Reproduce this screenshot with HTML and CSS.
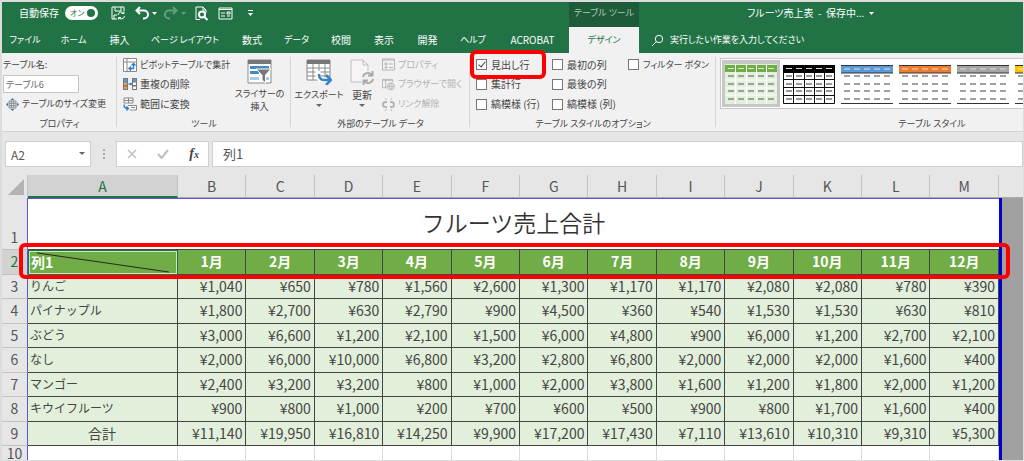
FILE: index.html
```html
<!DOCTYPE html>
<html lang="ja">
<head>
<meta charset="utf-8">
<title>フルーツ売上表</title>
<link rel="stylesheet" href="styles.css">
</head>
<body>
<div class="window">
  <header class="titlebar">
    <div class="quick">
      <label class="autosave" for="autosave">自動保存</label>
      <button class="switch" id="autosave" type="button">オン<span class="knob"></span></button>
      <button class="qbtn save" type="button" aria-label="保存"><svg width="15" height="14" viewBox="0 0 15 14"><path d="M6 13H1V1h12v4M4 1v4h6V1M3 13V9h3M7 9a3.3 3.3 0 0 1 6-1.500V5.500M13 7.500h-2.500M13.500 10a3.300 3.300 0 0 1-6 1.500V13.500M7.500 11.500H10"/></svg></button>
      <button class="qbtn undo" type="button" aria-label="元に戻す"><svg width="24" height="14" viewBox="0 0 24 14"><path class="bold" d="M5 1 1.500 4.500 5 8M2 4.500h7a3.500 3.500 0 0 1 0 8H8"/><path class="fill" d="M17 6h5l-2.500 3z"/></svg></button>
      <button class="qbtn redo" type="button" aria-label="やり直し"><svg width="24" height="14" viewBox="0 0 24 14"><path class="bold" d="M9 1l3.500 3.500L9 8M12 4.500H5a3.500 3.500 0 0 0 0 8h1"/><path class="fill" d="M17 6h5l-2.500 3z"/></svg></button>
      <button class="qbtn preview" type="button" aria-label="印刷プレビュー"><svg width="14" height="15" viewBox="0 0 14 15"><path d="M5 13.500H1V1h7l3 3v3M8 1v3h3"/><circle class="bold" cx="7" cy="8.500" r="3"/><path class="bold" d="M9.500 11l3 3"/></svg></button>
      <button class="qbtn form" type="button" aria-label="フォーム"><svg width="15" height="13" viewBox="0 0 15 13"><path d="M1 1h13v11H1zM1 2.500h13M3 6h4M3 9h4M9 5h3v2H9zM9 9h3"/></svg></button>
      <button class="qbtn more" type="button" aria-label="カスタマイズ"><svg width="7" height="8" viewBox="0 0 7 8"><path d="M1 1.500h5"/><path class="fill" d="M1 4h5L3.500 7z"/></svg></button>
    </div>
    <div class="context">テーブル ツール</div>
    <div class="doc">フルーツ売上表&nbsp; -&nbsp; 保存中...&nbsp; <svg width="5" height="3" viewBox="0 0 5 3"><path class="fill" d="M0 0h5L2.500 3z"/></svg></div>
  </header>
  <nav class="tabs">
    <a class="kana" href="#">ファイル</a>
    <a class="kana" href="#">ホーム</a>
    <a href="#">挿入</a>
    <a class="kana" href="#">ページ レイアウト</a>
    <a href="#">数式</a>
    <a class="kana" href="#">データ</a>
    <a href="#">校閲</a>
    <a href="#">表示</a>
    <a href="#">開発</a>
    <a class="kana" href="#">ヘルプ</a>
    <a href="#">ACROBAT</a>
    <a class="kana active" href="#">デザイン</a>
    <a class="kana tell" href="#"><svg width="13" height="13" viewBox="0 0 13 13"><circle cx="8" cy="5" r="3.700"/><path d="M5.300 7.700 1 12"/></svg>実行したい作業を入力してください</a>
  </nav>

  <section class="ribbon">
    <div class="group g-prop">
      <div class="rows">
        <label class="small" for="tname">テーブル名:</label>
        <input class="tname" id="tname" type="text" value="テーブル6">
        <button class="cmd small" type="button"><svg width="13" height="13" viewBox="0 0 13 13"><path class="g" d="M3 3h7v7H3zM3 5.300h7M3 7.700h7M5.300 3v7M7.700 3v7"/><path class="bf" d="M6.500 0l2 2h-4zM6.500 13l2-2h-4zM0 6.500l2-2v4zM13 6.500l-2-2v4z"/></svg>テーブルのサイズ変更</button>
      </div>
      <div class="name">プロパティ</div>
    </div>
    <div class="group g-tool">
      <div class="split">
        <div class="rows">
          <button class="cmd small" type="button"><svg width="14" height="14" viewBox="0 0 14 14"><path class="g" fill="#fff" d="M.5.5h13v13H.5zM.5 4h13M4 .5v13" /><path class="b" d="M6 10.500h4.500V5.500M8 8.500l-2 2 2 2M8.500 7.500l2-2 2 2"/></svg>ピボットテーブルで集計</button>
          <button class="cmd" type="button"><svg width="14" height="14" viewBox="0 0 14 14"><path class="df" d="M0 1h5v12H0zM9 1h5v12H9z"/><path fill="#5b9bd5" d="M1 2h3v2.500H1zM10 2h3v2.500h-3z"/><path fill="#f0a04b" d="M1 5.500h3V8H1zM1 9.500h3V12H1z"/><path fill="#fff" d="M10 5.500h3V8h-3zM10 9.500h3V12h-3z"/><path class="b" d="M5.500 7h3M7.500 6l1 1-1 1"/></svg>重複の削除</button>
          <button class="cmd" type="button"><svg width="14" height="14" viewBox="0 0 14 14"><path class="g" fill="#fff" d="M1 1h9v5H1zM1 3.500h9M5.500 1v5M5 8.500h8.500V13H7"/><path class="g" d="M8 10.500h4"/><path class="b" d="M1 7.500c0 3 1 4 4 4M3.500 9.500l2 2-2 2"/></svg>範囲に変換</button>
        </div>
        <button class="big slicer" type="button"><svg width="25" height="25" viewBox="0 0 25 25"><path class="g" fill="#fff" d="M1 1h23v23H1z"/><path class="df" d="M1 1h23v4H1z"/><path fill="#4488c4" d="M3 7h19v3H3z"/><path fill="#4488c4" d="M3 12h9v3H3z"/><path fill="#a8cbe8" d="M3 18h9v3H3zM18 18h4v3h-4z"/><path class="df" stroke="#fff" d="M9 10h15l-5.500 6v8L15 21v-5z"/></svg><span>スライサーの<br>挿入</span></button>
      </div>
      <div class="name">ツール</div>
    </div>
    <div class="group g-ext">
      <div class="split">
        <button class="big export" type="button"><svg width="26" height="26" viewBox="0 0 26 26"><path class="g" fill="#fff" d="M1 1h23v20H1zM1 9h23M1 13h23M1 17h23M7 5v16M13 5v16M19 5v16"/><path class="df" d="M1 1h23v4H1z"/><path d="M12 12v4c0 3 2 5 5 5h7" stroke="#fff" stroke-width="5" fill="none"/><path d="M13 15c0 4 2 6 5 6h5M20 16l5 5-5 5" stroke="#3b82c4" stroke-width="2.500" fill="none"/></svg><span>エクスポート</span><i class="caret"></i></button>
        <button class="big refresh" type="button"><svg width="25" height="26" viewBox="0 0 25 26"><path d="M1 1h12l5 5v17H1zM13 1v5h5" fill="#f7f3f7" stroke="#c4bec4"/><circle cx="18" cy="19" r="7" fill="#f1f1f1"/><path d="M13 18a5 5 0 0 1 9-2M23 20a5 5 0 0 1-9 2M22.500 12v4.500H18M13.500 26v-4.500H18" fill="none" stroke="#a9a9a9" stroke-width="1.800"/></svg><span class="kanji">更新</span><i class="caret"></i></button>
        <div class="rows">
          <button class="cmd small off" type="button" disabled><svg width="13" height="13" viewBox="0 0 13 13"><path class="o" d="M.5 1h12v11H.5zM.5 2h12M3 5h2v2H3zM3 9h2v1H3zM7 6h4M7 9.500h4"/></svg>プロパティ</button>
          <button class="cmd small off" type="button" disabled><svg width="13" height="13" viewBox="0 0 14 13"><path class="o" d="M5 10H.5V1h11v3M.5 2h11M4 2v8"/><circle class="o" cx="9.500" cy="8.500" r="3.800"/><path class="o" d="M6 8.500h7M9.500 5c-2 2-2 5 0 7M9.500 5c2 2 2 5 0 7"/></svg>ブラウザーで開く</button>
          <button class="cmd small off" type="button" disabled><svg width="13" height="13" viewBox="0 0 13 13"><path class="o thick" d="M5 4H3.500a2.500 2.500 0 0 0 0 5H5M8 4h1.500a2.500 2.500 0 0 1 0 5H8"/><path class="o" d="M3 0l1.500 2M10 0 8.500 2M3 13l1.500-2M10 13l-1.500-2"/></svg>リンク解除</button>
        </div>
      </div>
      <div class="name">外部のテーブル データ</div>
    </div>
    <div class="group g-opt">
      <div class="checks">
        <label><input type="checkbox" checked>見出し行</label>
        <label><input type="checkbox">最初の列</label>
        <label class="small"><input type="checkbox">フィルター ボタン</label>
        <label><input type="checkbox">集計行</label>
        <label class="wide"><input type="checkbox">最後の列</label>
        <label><input type="checkbox">縞模様 (行)</label>
        <label><input type="checkbox">縞模様 (列)</label>
      </div>
      <div class="name">テーブル スタイルのオプション</div>
      <div class="mark mark-check"></div>
    </div>
    <div class="group g-style">
      <div class="gallery">
        <svg class="defs" width="0" height="0"><defs>
          <g id="d"><path d="M3 0h6M13 0h6M23 0h6M33 0h6M43 0h6"/></g>
          <g id="body"><use href="#d" y="12"/><use href="#d" y="20"/><use href="#d" y="27"/><use href="#d" y="35"/></g>
        </defs></svg>
        <button class="thumb selected" type="button" aria-label="緑"><svg width="52" height="40" viewBox="0 0 52 40"><path fill="#e2efda" d="M0 0h52v40H0z"/><path fill="#70ad47" d="M0 1h52v7H0z"/><path stroke="#fff" d="M10.500 0v40M21.500 0v40M31.500 0v40M41.500 0v40M0 16h52M0 24h52M0 31h52"/><use href="#d" y="4.500" stroke="#d5ecc6"/><use href="#body" stroke="#555"/></svg></button>
        <button class="thumb" type="button" aria-label="黒"><svg width="52" height="40" viewBox="0 0 52 40"><path fill="#fff" stroke="#111" d="M.5 1.500h51v38H.5z"/><path fill="#000" d="M0 1h52v8H0z"/><path stroke="#111" d="M10.500 1v38M21.500 1v38M31.500 1v38M41.500 1v38M0 15.500h52M0 23.500h52M0 31.500h52"/><use href="#d" y="4.500" stroke="#ddd"/><use href="#body" stroke="#333"/></svg></button>
        <button class="thumb" type="button" aria-label="青"><svg width="52" height="40" viewBox="0 0 52 40"><path fill="#5b9bd5" d="M0 1h52v8H0z"/><path stroke="#333" d="M0 1.500h52M0 9h52M0 39.500h52"/><use href="#d" y="5" stroke="#d4e5f5"/><use href="#body" stroke="#444"/></svg></button>
        <button class="thumb" type="button" aria-label="オレンジ"><svg width="52" height="40" viewBox="0 0 52 40"><path fill="#ed7d31" d="M0 1h52v8H0z"/><path stroke="#333" d="M0 1.500h52M0 9h52M0 39.500h52"/><use href="#d" y="5" stroke="#ffe0c8"/><use href="#body" stroke="#444"/></svg></button>
        <button class="thumb" type="button" aria-label="灰色"><svg width="52" height="40" viewBox="0 0 52 40"><path fill="#a5a5a5" d="M0 1h52v8H0z"/><path stroke="#333" d="M0 1.500h52M0 9h52M0 39.500h52"/><use href="#d" y="5" stroke="#ddd"/><use href="#body" stroke="#444"/></svg></button>
        <button class="thumb" type="button" aria-label="黄"><svg width="52" height="40" viewBox="0 0 52 40"><path fill="#ffc000" d="M0 1h52v8H0z"/><path stroke="#333" d="M0 1.500h52M0 9h52M0 39.500h52"/><use href="#d" y="5" stroke="#fff0c0"/><use href="#body" stroke="#444"/></svg></button>
      </div>
      <div class="name">テーブル スタイル</div>
    </div>
  </section>

  <section class="formula">
    <button class="cellref" type="button">A2<i class="caret"></i></button>
    <span class="grip"><i></i><i></i><i></i></span>
    <div class="fx">
      <button type="button" aria-label="キャンセル"><svg width="10" height="10" viewBox="0 0 10 10"><path d="M1 1l8 8M9 1 1 9" stroke="#bdbdbd" stroke-width="1.500"/></svg></button>
      <button type="button" aria-label="入力"><svg width="12" height="10" viewBox="0 0 12 10"><path d="M1 5l3.500 4L11 1" stroke="#bdbdbd" stroke-width="2" fill="none"/></svg></button>
      <button class="fxb" type="button"><i>f</i><small>x</small></button>
    </div>
    <input class="entry" type="text" value="列1" aria-label="数式バー">
  </section>

  <main class="sheet">
    <table>
      <colgroup><col class="c-num"><col class="c-a"><col span="12"><col class="c-out"></colgroup>
      <thead><tr><th class="corner"><svg width="16" height="16" viewBox="0 0 16 16"><path fill="#b3b3b3" d="M16 0v16H0z"/></svg></th><th class="sel">A</th><th>B</th><th>C</th><th>D</th><th>E</th><th>F</th><th>G</th><th>H</th><th>I</th><th>J</th><th>K</th><th>L</th><th>M</th><th></th></tr></thead>
      <tbody>
        <tr class="title"><th>1</th><td colspan="13">フルーツ売上合計</td><td class="out" rowspan="10"></td></tr>
        <tr class="months"><th>2</th><td class="cursor">列1<svg class="slash" viewBox="0 0 150 24" preserveAspectRatio="none"><path d="M8 2 142 22" stroke="#222" fill="none"/></svg></td><td>1月</td><td>2月</td><td>3月</td><td>4月</td><td>5月</td><td>6月</td><td>7月</td><td>8月</td><td>9月</td><td>10月</td><td>11月</td><td>12月</td></tr>
        <tr class="data"><th>3</th><td>りんご</td><td>¥1,040</td><td>¥650</td><td>¥780</td><td>¥1,560</td><td>¥2,600</td><td>¥1,300</td><td>¥1,170</td><td>¥1,170</td><td>¥2,080</td><td>¥2,080</td><td>¥780</td><td>¥390</td></tr>
        <tr class="data"><th>4</th><td>パイナップル</td><td>¥1,800</td><td>¥2,700</td><td>¥630</td><td>¥2,790</td><td>¥900</td><td>¥4,500</td><td>¥360</td><td>¥540</td><td>¥1,530</td><td>¥1,530</td><td>¥630</td><td>¥810</td></tr>
        <tr class="data"><th>5</th><td>ぶどう</td><td>¥3,000</td><td>¥6,600</td><td>¥1,200</td><td>¥2,100</td><td>¥1,500</td><td>¥6,000</td><td>¥4,800</td><td>¥900</td><td>¥6,000</td><td>¥1,200</td><td>¥2,700</td><td>¥2,100</td></tr>
        <tr class="data"><th>6</th><td>なし</td><td>¥2,000</td><td>¥6,000</td><td>¥10,000</td><td>¥6,800</td><td>¥3,200</td><td>¥2,800</td><td>¥6,800</td><td>¥2,000</td><td>¥2,000</td><td>¥2,000</td><td>¥1,600</td><td>¥400</td></tr>
        <tr class="data"><th>7</th><td>マンゴー</td><td>¥2,400</td><td>¥3,200</td><td>¥3,200</td><td>¥800</td><td>¥1,000</td><td>¥2,000</td><td>¥3,800</td><td>¥1,600</td><td>¥1,200</td><td>¥1,800</td><td>¥2,000</td><td>¥1,200</td></tr>
        <tr class="data"><th>8</th><td>キウイフルーツ</td><td>¥900</td><td>¥800</td><td>¥1,000</td><td>¥200</td><td>¥700</td><td>¥600</td><td>¥500</td><td>¥900</td><td>¥800</td><td>¥1,700</td><td>¥1,600</td><td>¥400</td></tr>
        <tr class="data total"><th>9</th><td>合計</td><td>¥11,140</td><td>¥19,950</td><td>¥16,810</td><td>¥14,250</td><td>¥9,900</td><td>¥17,200</td><td>¥17,430</td><td>¥7,110</td><td>¥13,610</td><td>¥10,310</td><td>¥9,310</td><td>¥5,300</td></tr>
        <tr class="blank"><th>10</th><td></td><td></td><td></td><td></td><td></td><td></td><td></td><td></td><td></td><td></td><td></td><td></td><td></td></tr>
      </tbody>
    </table>
    <div class="mark mark-row"></div>
  </main>
</div>
</body>
</html>
```

FILE: styles.css
```css
* { box-sizing: border-box; }
body {
  margin: 0;
  font-family: "Noto Sans CJK JP", sans-serif;
  font-size: 11px;
  line-height: 16px;
  color: #444;
  background: #e6e6e6;
}
button, input { font: inherit; color: inherit; margin: 0; }
button { padding: 0; border: 0; background: none; white-space: nowrap; }
svg { flex: none; }
.window {
  height: 100vh;
  overflow: hidden;
  border: solid #dcdcdc;
  border-width: 2px 1px 1px 2px;
}

/* title bar */
.titlebar { display: flex; height: 25px; background: #217346; color: #fff; }
.quick { width: 567px; display: flex; align-items: center; padding: 0 0 3px 17px; }
.autosave { width: 46px; font-size: 10px; }
.switch {
  display: flex; align-items: center; justify-content: space-between;
  width: 33px; height: 14px; padding: 0 3px 0 5px;
  border-radius: 7px; background: #fff; color: #217346;
  font-size: 8px; line-height: 14px;
  font-feature-settings: "palt";
}
.knob { width: 8px; height: 8px; border-radius: 50%; background: #217346; }
.qbtn { display: flex; }
.qbtn path, .qbtn circle { fill: none; stroke: #fff; }
.qbtn .bold { stroke-width: 2; }
.qbtn .fill, .doc .fill { fill: #fff; stroke: none; }
.save { margin-left: 13px; }
.undo { margin-left: 9px; }
.redo { margin-left: 5px; opacity: .3; }
.preview { margin-left: 7px; }
.form { margin-left: 9px; }
.more { margin-left: 14px; }
.context, .doc, .kana { font-feature-settings: "palt"; }
.context { width: 70px; background: #1e5c39; color: #a9c8b5; text-align: center; font-size: 9px; line-height: 22px; }
.doc { display: flex; align-items: center; padding: 0 0 3px 108px; font-size: 10px; white-space: pre; }

/* tabs */
.tabs {
  display: grid;
  grid-template-columns: 46px 51px 41px 90px 44px 45px 44px 42px 45px 46px 73px 70px auto;
  height: 26px; background: #217346;
}
.tabs a { color: #fff; text-decoration: none; text-align: center; line-height: 26px; font-size: 10px; white-space: nowrap; }
.tabs .kana { font-size: 9px; }
.tabs .active { background: #f1f1f1; color: #217346; }
.tabs .tell { display: flex; align-items: center; gap: 6px; padding-left: 12px; }
.tell svg { fill: none; stroke: #fff; }

/* ribbon */
.ribbon {
  display: flex; height: 79px;
  background: #f1f1f1; border-bottom: 1px solid #d2d2d2;
  font-feature-settings: "palt";
}
.group { position: relative; flex: none; padding-top: 2px; }
.group::after { content: ""; position: absolute; right: 0; top: 4px; bottom: 4px; width: 1px; background: #d6d6d6; }
.g-prop { width: 115px; }
.g-tool { width: 174px; }
.g-ext { width: 179px; }
.g-opt { width: 246px; z-index: 2; }
.g-style { width: 432px; }
.name { text-align: center; font-size: 9px; line-height: 20px; }
.rows { display: grid; grid-template-rows: repeat(3, 1fr); align-items: center; height: 59px; font-size: 10px; }
.g-prop .rows { padding-left: 1px; }
.tname { width: 76px; height: 18px; padding: 0 2px; border: 1px solid #c6c6c6; background: #fff; color: #666; font-size: 9px; }
.cmd { display: flex; align-items: center; gap: 3px; }
.rows .small, .checks .small { font-size: 9px; }
.g-prop .cmd { padding-left: 3px; }
.g { fill: none; stroke: #888; }
path.g[fill] { fill: #fff; }
.b { fill: none; stroke: #2f7fc1; stroke-width: 1.4; }
.bf { fill: #2f7fc1; }
.df { fill: #777; }
.o { fill: none; stroke: #b4b4b4; }
.thick { stroke-width: 2; }
.off { color: #b1b1b1; }
.split { display: flex; height: 59px; }
.g-tool .rows { padding-left: 6px; width: 115px; }
.big { display: flex; flex-direction: column; align-items: center; padding-top: 4px; font-size: 9px; line-height: 13px; }
.big span { margin-top: 3px; }
.big .kanji { font-size: 10px; }
.slicer { width: 55px; }
.export { width: 56px; }
.refresh { width: 30px; }
.g-ext .rows { padding-left: 5px; }
.caret { border: solid transparent; border-width: 3px 3px 0; border-top-color: #666; margin-top: 3px; }
.checks {
  display: grid;
  grid-template-columns: 76px 76px auto;
  grid-template-rows: repeat(3, 1fr);
  align-items: center;
  height: 59px; padding-left: 6px; font-size: 10px;
}
.checks label { display: flex; align-items: center; gap: 4px; white-space: nowrap; }
.checks .wide { grid-column: 2 / 4; }
.checks input {
  appearance: none; position: relative; flex: none; width: 11px; height: 11px;
  border: 1px solid #777; background: #fff;
}
.checks input:checked::after {
  content: ""; position: absolute; left: 3px; top: 0; width: 3px; height: 6px;
  border: solid #444; border-width: 0 1px 1px 0; transform: rotate(40deg);
}
.mark { position: absolute; border: 4px solid #f00; border-radius: 6px; pointer-events: none; }
.mark-check { left: 0; top: -3px; width: 76px; height: 29px; }
.gallery {
  display: flex; height: 51px; margin: 3px 0 5px 4px; padding: 1px;
  border: 1px solid #c6c6c6; background: #fff;
}
.defs { position: absolute; }
.thumb { width: 58px; flex: none; display: flex; align-items: center; justify-content: center; }
.thumb.selected { background: #c6c6c6; }

/* formula bar */
.formula { display: flex; height: 43px; padding: 9px 0 8px 3px; background: #e6e6e6; }
.cellref, .fx, .entry { border: 1px solid #d0d0d0; background: #fff; }
.cellref { width: 86px; display: flex; align-items: center; justify-content: space-between; padding: 2px 5px 0 5px; font-size: 12px; color: #555; }
.cellref .caret { margin: 0 0 4px; }
.grip { width: 25px; display: flex; flex-direction: column; align-items: center; justify-content: center; gap: 2px; }
.grip i { width: 2px; height: 2px; background: #aaa; }
.fx { width: 93px; display: flex; align-items: center; justify-content: space-between; padding: 0 9px 0 10px; }
.fxb { font: italic bold 14px "Liberation Serif", serif; color: #444; }
.fxb small { font-size: 10px; }
.entry { flex: 1; margin-left: 3px; padding: 0 10px; font-size: 13px; color: #555; min-width: 0; }

/* worksheet */
.sheet { position: relative; }
table { width: 100%; table-layout: fixed; border-collapse: separate; border-spacing: 0; font-size: 14px; line-height: 20px; color: #444; }
.c-num { width: 26px; }
.c-a { width: 150px; }
.c-out { width: 24px; }
th, td { padding: 0; white-space: nowrap; overflow: hidden; }
th { font-weight: 400; background: #e6e6e6; color: #555; }
thead th { height: 23px; border-right: 1px solid #c2c2c2; border-bottom: 1px solid #aaa; }
thead th:last-child { border-right: 0; }
thead .corner { text-align: right; vertical-align: bottom; line-height: 0; padding: 0 3px 2px 0; border-bottom-color: #e6e6e6; }
thead .sel { background: #d2d2d2; color: #217346; border-bottom: 2px solid #217346; }
tbody th { border-right: 1px solid #5a5ad0; border-bottom: 1px solid #c2c2c2; }
.title th { vertical-align: bottom; padding-bottom: 2px; }
.title td { height: 52px; background: #fff; color: #333; text-align: center; vertical-align: top; font-size: 23px; font-weight: 350; line-height: 46px; border-top: 1px solid #5a5ad8; border-bottom: 1px solid #444; }
tr > td.out { background: #a0a0a0; border: 0; border-left: 3px solid #0000d0; }
.months { height: 25px; }
.months th, .months td, .data th, .data td { padding-bottom: 2px; }
.months th { background: #d2d2d2; color: #217346; }
.months td { background: #70ad47; color: #fff; font-weight: 700; text-align: center; border-right: 1px solid #444; border-bottom: 1px solid #444; }
.months .cursor { position: relative; text-align: left; padding-left: 2px; border: 1px solid #217346; box-shadow: inset 0 0 0 1px #cfe6c0; }
.slash { position: absolute; left: 0; top: 0; width: 100%; height: 100%; }
.data { height: 24px; }
.data:nth-child(even) { height: 25px; }
.data td { background: #e2efda; text-align: right; padding-right: 3px; border-right: 1px solid #444; border-bottom: 1px solid #444; }
.data td:nth-child(2) { text-align: left; padding-left: 2px; font-size: 12px; }
.data.total td:nth-child(2) { text-align: center; font-size: 14px; }
.blank { height: 25px; }
.blank th { vertical-align: top; line-height: 14px; }
.blank td { background: #fff; border-right: 1px solid #dcdcdc; }
.months, .data { line-height: 18px; }
.mark-row { left: 17px; right: 13px; top: 68px; height: 36px; }
```
